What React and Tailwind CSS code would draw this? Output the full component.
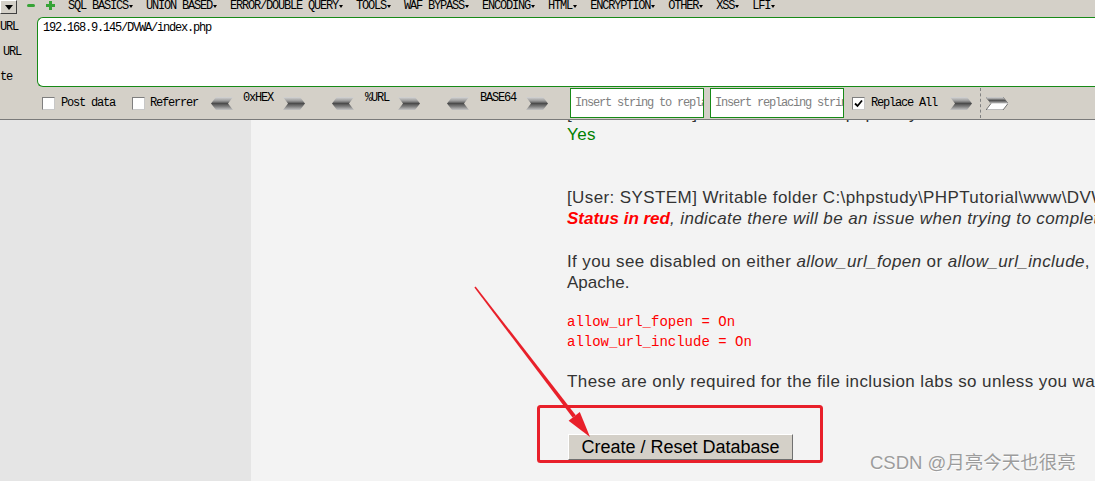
import React, { useId } from 'react';

const menus = ['SQL BASICS', 'UNION BASED', 'ERROR/DOUBLE QUERY', 'TOOLS', 'WAF BYPASS', 'ENCODING', 'HTML', 'ENCRYPTION', 'OTHER', 'XSS', 'LFI'];

const Chevron = ({ dir = 'right', white = false }) => {
    const id = useId().replace(/:/g, '');
    const right = '0,0 17,0 22,6.5 17,13 0,13 5,6.5';
    const left = '5,0 22,0 17,6.5 22,13 5,13 0,6.5';
    return (
        <svg width="22" height="13" viewBox="0 0 22 13" className="shrink-0 block">
            <defs>
                <linearGradient id={`g${id}`} x1="0" y1="0" x2="0" y2="1">
                    <stop offset="0" stopColor="#d6d6d6" />
                    <stop offset="0.3" stopColor="#9a9a9a" />
                    <stop offset="0.5" stopColor="#4c4c4c" />
                    <stop offset="0.72" stopColor="#7c7c7c" />
                    <stop offset="1" stopColor="#c4c4c4" />
                </linearGradient>
            </defs>
            {white ? (
                <>
                    <polygon points={right} fill="#fff" stroke="#555" strokeWidth="0.8" />
                    <polygon points="0,0 17,0 22,6.5 5,6.5" fill={`url(#g${id})`} />
                </>
            ) : (
                <polygon points={dir === 'right' ? right : left} fill={`url(#g${id})`} />
            )}
        </svg>
    );
};

const Check = ({ checked }) => (
    <div className="w-[13px] h-[13px] shrink-0 bg-white border border-[#7f7f7f] border-r-[#c8c8c8] border-b-[#c8c8c8] flex items-center justify-center">
        {checked && (
            <svg width="9" height="9" viewBox="0 0 9 9">
                <polyline points="1,4.5 3.5,7 8,1.5" fill="none" stroke="#000" strokeWidth="1.8" />
            </svg>
        )}
    </div>
);

const App = () => {
    const mono = "font-['Liberation_Mono',monospace]";
    return (
        <div className="relative w-[1095px] h-[481px] overflow-hidden flex flex-col bg-[#f3f3f3] font-['Liberation_Sans',Arial,sans-serif]">
            {/* hackbar */}
            <div className={`h-[120px] shrink-0 bg-[#d4d0c8] border-b border-[#7a7a7a] flex flex-col text-[12px] tracking-[-1.2px] text-black ${mono}`}>
                <div className="h-[17px] flex items-start">
                    <div className="w-[17px] h-[14px] border border-t-white border-l-white border-r-[#404040] border-b-[#404040] bg-[#d4d0c8] flex items-center justify-center">
                        <svg width="8" height="5" viewBox="0 0 8 5"><polygon points="0,0 8,0 4,5" fill="#000" /></svg>
                    </div>
                    <div className="ml-[10px] mt-[4px] w-[8px] h-[3px] rounded-full bg-[#36a336]" />
                    <svg width="9" height="9" viewBox="0 0 9 9" className="ml-[11px] mt-[1px]">
                        <path d="M3 0h3v3h3v3H6v3H3V6H0V3h3z" fill="#36a336" />
                    </svg>
                    <div className="ml-[13px] flex gap-[13px] leading-[12px]">
                        {menus.map((m) => (
                            <div key={m} className="flex items-center whitespace-nowrap">
                                <span>{m}</span>
                                <svg width="4" height="3" viewBox="0 0 4 3" className="ml-px"><polygon points="0,0 4,0 2,3" fill="#000" /></svg>
                            </div>
                        ))}
                    </div>
                </div>
                <div className="h-[70px] flex">
                    <div className="w-[37px] flex flex-col gap-[5px] leading-[20px] whitespace-nowrap">
                        <div>URL</div>
                        <div className="pl-[3px]">URL</div>
                        <div>te</div>
                    </div>
                    <div className="flex-1 bg-white border border-r-0 border-[#178a17] rounded-l-[6px] pl-[5px] pt-[4px] leading-[12px]">
                        192.168.9.145/DVWA/index.php
                    </div>
                </div>
                <div className="h-[32px] flex items-center pl-[42px] whitespace-nowrap leading-[12px]">
                    <Check />
                    <span className="ml-[6px] w-[54px] shrink-0">Post data</span>
                    <div className="ml-[17px]"><Check /></div>
                    <span className="ml-[5px] w-[48px] shrink-0">Referrer</span>
                    <div className="ml-[13px]"><Chevron dir="left" /></div>
                    <span className="ml-[10px] w-[30px] shrink-0 self-start mt-[5px]">0xHEX</span>
                    <div className="ml-[10px]"><Chevron /></div>
                    <div className="ml-[27px]"><Chevron dir="left" /></div>
                    <span className="ml-[11px] w-[24px] shrink-0 self-start mt-[5px]">%URL</span>
                    <div className="ml-[9px]"><Chevron /></div>
                    <div className="ml-[27px]"><Chevron dir="left" /></div>
                    <span className="ml-[11px] w-[36px] shrink-0 self-start mt-[5px]">BASE64</span>
                    <div className="ml-[10px]"><Chevron /></div>
                    <div className="ml-[22px] w-[134px] h-[30px] shrink-0 bg-white border border-[#178a17] overflow-hidden pl-[4px] flex items-center text-[#808080]">
                        Insert string to replace
                    </div>
                    <div className="ml-[6px] w-[134px] h-[30px] shrink-0 bg-white border border-[#178a17] overflow-hidden pl-[4px] flex items-center text-[#808080]">
                        Insert replacing string
                    </div>
                    <div className="ml-[8px]"><Check checked /></div>
                    <span className="ml-[6px] w-[66px] shrink-0">Replace All</span>
                    <div className="ml-[13px]"><Chevron /></div>
                    <div className="ml-[8px] h-[30px] border-l border-dashed border-[#808080]" />
                    <div className="ml-[5px]"><Chevron white /></div>
                </div>
            </div>

            {/* page */}
            <div className="flex-1 flex overflow-hidden">
                <div className="w-[251px] shrink-0 bg-[#e5e5e5]" />
                <div className="flex-1 bg-[#f3f3f3] pl-[316px] whitespace-nowrap text-[17px] tracking-[0.4px] leading-[21px] text-[#333] overflow-hidden">
                    <div className="-mt-[17px]">{'[User: SYSTEM] Writable folder C:\\phpstudy\\PHPTutorial\\www\\DVWA\\hackable\\uploads\\:'}</div>
                    <div className="text-[#008000]">Yes</div>
                    <div className="mt-[42px]">{'[User: SYSTEM] Writable folder C:\\phpstudy\\PHPTutorial\\www\\DVWA\\config: Yes'}</div>
                    <div className="italic">
                        <span className="font-bold text-[#ff0000] tracking-normal">Status in red</span>, indicate there will be an issue when trying to complete some modules.
                    </div>
                    <div className="mt-[22px]">
                        If you see disabled on either <i>allow_url_fopen</i> or <i>allow_url_include</i>, set the following in your php.ini file and restart
                    </div>
                    <div className="tracking-normal">Apache.</div>
                    <div className={`mt-[19px] text-[14px] tracking-normal leading-[20px] text-[#ff0000] ${mono}`}>
                        <div>allow_url_fopen = On</div>
                        <div>allow_url_include = On</div>
                    </div>
                    <div className="mt-[19px]">
                        These are only required for the file inclusion labs so unless you want to play with those, you can ignore them.
                    </div>
                    <button className="mt-[42px] ml-px w-[225px] h-[26px] bg-[#d4d0c8] border border-t-white border-l-white border-r-[#707070] border-b-[#707070] text-[18px] tracking-normal leading-[24px] text-black text-center">
                        Create / Reset Database
                    </button>
                </div>
            </div>

            {/* annotation */}
            <svg className="absolute inset-0 pointer-events-none" width="1095" height="481">
                <rect x="538.5" y="406.5" width="283" height="55" rx="2" fill="none" stroke="#e8202a" strokeWidth="3" />
                <polygon points="475.63,286.51 575.8,415.2 572.6,417.6 474.37,287.49" fill="#e8202a" />
                <polygon points="590,437 568.6,420.7 579.8,412.1" fill="#e8202a" />
            </svg>

            <div className="absolute left-[870px] top-[451px] text-[18.5px] leading-[24px] text-[#9c9c9c] whitespace-nowrap font-['Liberation_Sans','Noto_Sans_CJK_SC',sans-serif] [text-shadow:0_1px_0_#fff]">
                CSDN @月亮今天也很亮
            </div>
        </div>
    );
};

export default App;
